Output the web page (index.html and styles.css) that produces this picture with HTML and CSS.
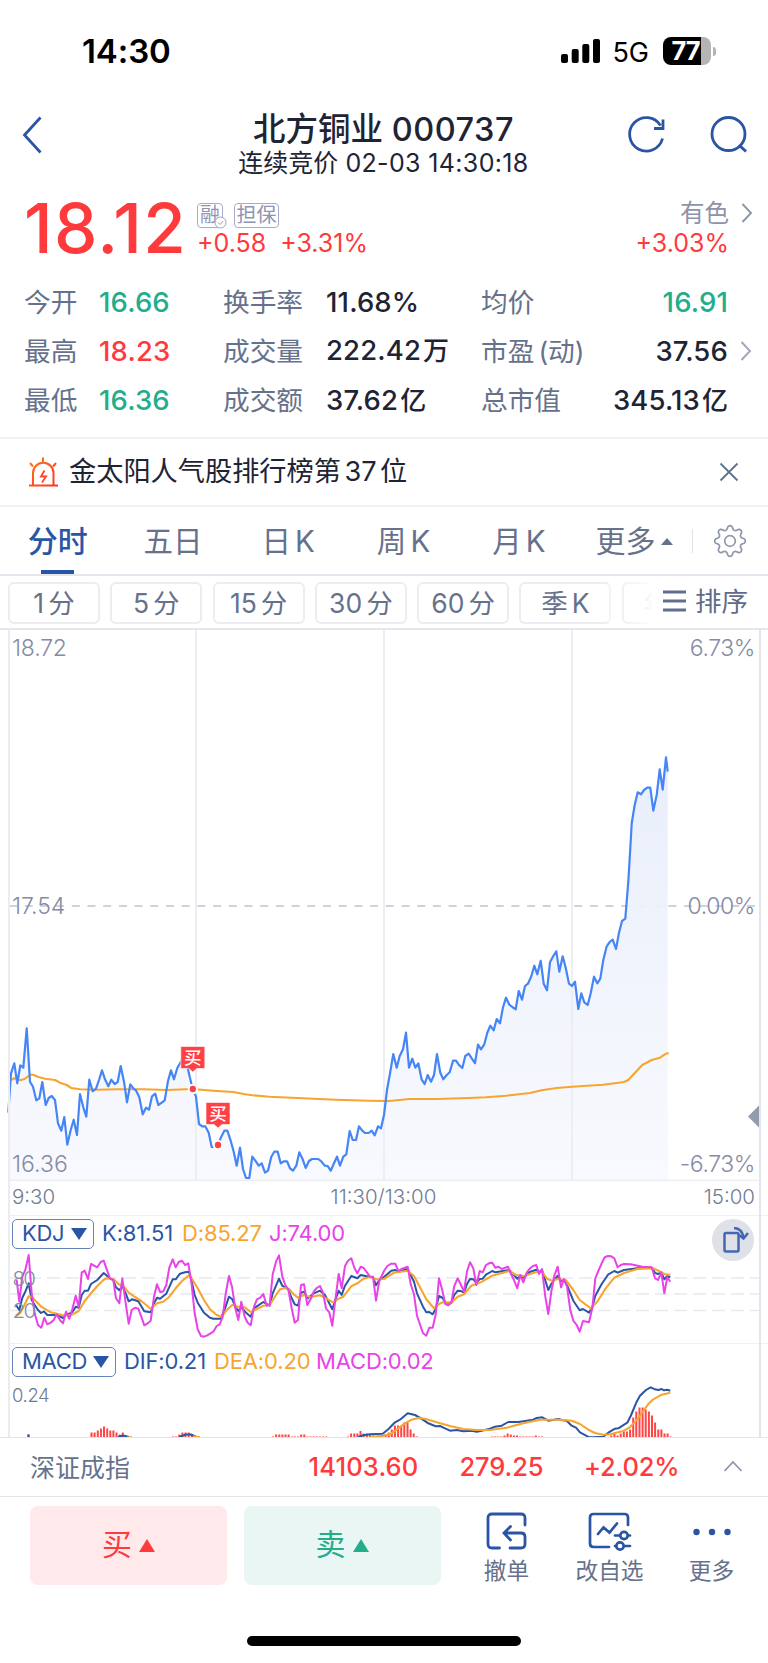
FILE: index.html
```html
<!DOCTYPE html>
<html lang="zh-CN">
<head>
<meta charset="utf-8">
<title>北方铜业 000737</title>
<link rel="stylesheet" href="styles.css">
</head>
<body>
<div class="app">
  <div class="status">
    <span class="clock">14:30</span>
    <svg class="signal" width="40" height="26" viewBox="0 0 40 26"><g fill="#000"><rect x="0" y="16" width="7" height="9" rx="2"/><rect x="10.7" y="11" width="7" height="14" rx="2"/><rect x="21.3" y="6" width="7" height="19" rx="2"/><rect x="32" y="1" width="7" height="24" rx="2"/></g></svg>
    <span class="net">5G</span>
    <div class="battery"><span>77</span></div><i class="batcap"></i>
  </div>

  <header class="header">
    <svg class="back" width="22" height="38" viewBox="0 0 22 38"><path d="M19.500 1.500 3.500 19 19.500 36.500" fill="none" stroke="#2a55a5" stroke-width="2.800"/></svg>
    <div class="titles"><h1>北方铜业 <b>000737</b></h1><p>连续竞价 <b>02-03 14:30:18</b></p></div>
    <svg class="refresh" width="40" height="40" viewBox="0 0 40 40"><path d="M35.500 23.500A16.700 16.700 0 1 1 33.500 10.500M36 4.500V13.500H27" fill="none" stroke="#2a55a5" stroke-width="2.800"/></svg>
    <svg class="search" width="40" height="40" viewBox="0 0 40 40"><circle cx="19.500" cy="19" r="16.500" fill="none" stroke="#2a55a5" stroke-width="2.800"/><path d="m30 30 7 6.500" stroke="#2a55a5" stroke-width="3"/></svg>
  </header>

  <section class="quote">
    <div class="price">18.12</div>
    <div class="change">
      <div class="badges"><span class="badge one">融<svg width="13" height="13" viewBox="0 0 13 13"><circle cx="6.500" cy="6.500" r="5.500" fill="#fff" stroke="#9c9fc0"/><path d="m4 6.500 2 2 3.200-3.600" fill="none" stroke="#9c9fc0"/></svg></span><span class="badge">担保</span></div>
      <div class="delta"><span>+0.58</span><span>+3.31%</span></div>
    </div>
    <div class="sector"><div class="sname">有色</div><div class="sdelta">+3.03%</div></div>
    <svg class="chev c1" width="12" height="20" viewBox="0 0 12 20"><path d="m1.500 1 8.500 9-8.500 9" fill="none" stroke="#8d95aa" stroke-width="1.900"/></svg>
  </section>

  <section class="stats">
    <span class="k">今开</span><span class="v g">16.66</span><span class="k">换手率</span><span class="v">11.68%</span><span class="k">均价</span><span class="v r g">16.91</span><i></i>
    <span class="k">最高</span><span class="v red">18.23</span><span class="k">成交量</span><span class="v">222.42<em>万</em></span><span class="k">市盈<em>(动)</em></span><span class="v r">37.56</span><svg class="chev" width="12" height="20" viewBox="0 0 12 20"><path d="m1.500 1 8.500 9-8.500 9" fill="none" stroke="#a0a6ba" stroke-width="1.900"/></svg>
    <span class="k">最低</span><span class="v g">16.36</span><span class="k">成交额</span><span class="v">37.62<em>亿</em></span><span class="k">总市值</span><span class="v r">345.13<em>亿</em></span><i></i>
  </section>

  <section class="notice">
    <svg width="32" height="32" viewBox="0 0 32 32" fill="none"><defs><linearGradient id="alarm" x1="0" y1="0" x2="1" y2="1"><stop offset="0" stop-color="#ff7a1a"/><stop offset="1" stop-color="#ff3321"/></linearGradient></defs><path d="M2 29.500h29M6 29.500V17a9 9 0 0 1 20.500 0v12.500M16 1.500V6M3 7l3 3.500M29 7l-3 3.500" stroke="url(#alarm)" stroke-width="2"/><path d="m17.500 14.500-3.500 6h5l-4 6" stroke="#ff4527" stroke-width="1.800"/></svg>
    <span class="ntext">金太阳人气股排行榜第<b>37</b>位</span>
    <svg class="close" width="20" height="20" viewBox="0 0 20 20"><path d="m1.500 1.500 17 17m0-17-17 17" stroke="#5f6f8f" stroke-width="1.800"/></svg>
  </section>

  <nav class="tabs">
    <span class="tab on">分时</span><span class="tab">五日</span><span class="tab">日<b>K</b></span><span class="tab">周<b>K</b></span><span class="tab">月<b>K</b></span><span class="tab more">更多<i class="up"></i></span>
    <i class="sep"></i>
    <svg class="gear" width="34" height="34" viewBox="0 0 34 34" fill="none" stroke="#8f97ad" stroke-width="1.700"><circle cx="17" cy="17" r="5.300"/><path id="gear"/></svg>
  </nav>

  <div class="periods">
    <span class="chip">1<em>分</em></span><span class="chip">5<em>分</em></span><span class="chip">15<em>分</em></span><span class="chip">30<em>分</em></span><span class="chip">60<em>分</em></span><span class="chip soft">季<em>K</em></span><span class="chip ghost">年<em>K</em></span>
    <div class="sort"><svg width="24" height="22" viewBox="0 0 24 22"><path d="M0 2h23M0 11h23M0 20h23" stroke="#5f6f8f" stroke-width="3"/></svg>排序</div>
  </div>

  <main class="charts">
    <section class="plot">
      <svg width="768" height="551" viewBox="0 630 768 551">
        <defs><linearGradient id="area" gradientUnits="userSpaceOnUse" x1="0" y1="755" x2="0" y2="1180"><stop offset="0" stop-color="#e6edfa"/><stop offset="1" stop-color="#f8f9fe"/></linearGradient></defs>
        <path class="zero" d="M9 906H760"/>
        <path id="fill" fill="url(#area)" fill-opacity=".92"/>
        <path class="grid" d="M196 630V1180M384 630V1180M572 630V1180M8 1180.500H760"/>
        <path id="avg" class="line avg"/><path id="px" class="line px"/>
        <g id="marks"></g>
        <path d="M760 1104.500v24l-12-12z" fill="#929bae"/>
      </svg>
      <span class="lab tl">18.72</span><span class="lab tr">6.73%</span>
      <span class="lab ml">17.54</span><span class="lab mr">0.00%</span>
      <span class="lab bl">16.36</span><span class="lab br">-6.73%</span>
    </section>
    <div class="axis"><span>9:30</span><span>11:30/13:00</span><span>15:00</span></div>
    <section class="kdj">
      <div class="legend"><span class="pick kp">KDJ<i></i></span><span class="blue w1">K:81.51</span><span class="org w2">D:85.27</span><span class="pur w3">J:74.00</span></div>
      <svg width="768" height="128" viewBox="0 1215 768 128">
        <path class="dash" d="M9 1278H760M9 1294H760M9 1310.500H760"/>
        <path id="k" class="line k"/><path id="d" class="line avg"/><path id="j" class="line j"/>
        <g class="lvl"><text x="12.500" y="1286">80</text><text x="12.500" y="1318">20</text></g>
      </svg>
      <div class="rotate"><svg width="42" height="42" viewBox="0 0 42 42" fill="none" stroke="#4168b1" stroke-width="2.500"><rect x="12.500" y="14" width="14" height="18.500" rx="1.500"/><path d="M22 9q8 .5 9.500 9.500M27 16l4.500 3.500 4.500-5.500"/></svg></div>
    </section>
    <section class="macd">
      <div class="legend"><span class="pick mp">MACD<i></i></span><span class="blue w4">DIF:0.21</span><span class="org w5">DEA:0.20</span><span class="pur w6">MACD:0.02</span></div>
      <span class="scale">0.24</span>
      <svg width="768" height="94" viewBox="0 1343 768 94"><path id="bars" stroke="#ff4545" stroke-width="2"/><path id="dif" class="line k"/><path id="dea" class="line avg"/></svg>
    </section>
  </main>

  <section class="index"><span class="iname">深证成指</span><span class="i1">14103.60</span><span class="i2">279.25</span><span class="i3">+2.02%</span><svg width="20" height="12" viewBox="0 0 20 12"><path d="m1.500 11 8.500-9 8.500 9" fill="none" stroke="#8d95aa" stroke-width="1.700"/></svg></section>

  <footer class="actions">
    <div class="btn buy">买<i></i></div><div class="btn sell">卖<i></i></div>
    <div class="act a1"><svg width="44" height="40" viewBox="0 0 44 40" fill="none" stroke="#2a55a5" stroke-width="2.800" stroke-linecap="round"><path d="M40 13V6q0-4-4-4H7Q3 2 3 6v26q0 4 4 4h7.500M25 36h11q4 0 4-4v-7q0-4-4-4H19.500M25.500 14.500 19 21l6.500 7"/></svg><span>撤单</span></div>
    <div class="act a2"><svg width="44" height="40" viewBox="0 0 44 40" fill="none" stroke="#2a55a5" stroke-width="2.700" stroke-linecap="round"><path d="M40 13V5.500Q40 2 36.500 2H5.500Q2 2 2 5.500v26q0 3.500 3.500 3.500H21M10 22l5.500-6.500 6 5L29 11.500M27 23.500H31m10 0h1M27 34h1m9 0H42"/><circle cx="36" cy="23.500" r="3.700"/><circle cx="32" cy="34" r="3.700"/></svg><span>改自选</span></div>
    <div class="act a3"><svg width="44" height="40" viewBox="0 0 44 40" fill="#2a55a5"><circle cx="6.500" cy="20" r="3.200"/><circle cx="22" cy="20" r="3.200"/><circle cx="37.500" cy="20" r="3.200"/></svg><span>更多</span></div>
  </footer>
  <div class="home"></div>
</div>
<script src="chart.js"></script>
</body>
</html>
```

FILE: styles.css
```css
* { box-sizing: border-box; }
body { margin: 0; background: #fff; font-family: Inter, "Noto Sans CJK SC", sans-serif; color: #1e2433; }
i, em { font-style: normal; }
b { font-weight: inherit; }
.app { width: 768px; height: 1663px; overflow: hidden; display: flex; flex-direction: column; }
.app > * { flex-shrink: 0; }
svg { display: block; flex-shrink: 0; }
span { white-space: nowrap; }

.status { height: 102px; display: flex; align-items: center; padding-left: 82px; color: #000; }
.clock { width: 479px; font-size: 33px; font-weight: 600; letter-spacing: -.1px; }
.net { width: 50px; margin: 2px 0 0 11.500px; font-size: 27px; letter-spacing: -.2px; }
.battery { width: 48px; height: 28px; border-radius: 8px; background: linear-gradient(90deg, #000 38px, #b4b4b4 38px); color: #fff; font-size: 25.500px; font-weight: 700; line-height: 28px; padding-left: 9px; letter-spacing: -1px; }
.batcap { width: 3px; height: 9px; margin-left: 2px; border-radius: 0 4px 4px 0; background: #b4b4b4; }

.header { height: 88px; display: flex; position: relative; padding: 13px 19px 0 21px; }
.back { margin-top: 1px; }
.titles { width: 300px; margin: -4px 0 0 191px; text-align: center; }
.titles h1 { margin: 0; font-size: 32.500px; line-height: 38px; font-weight: 500; white-space: nowrap; }
.titles h1 b { letter-spacing: .5px; }
.titles p { margin: -1px 0 0; font-size: 25px; line-height: 30px; white-space: nowrap; }
.titles p b { letter-spacing: .35px; }
.refresh { margin-left: 94px; }
.search { margin-left: 42px; }

.quote { height: 86px; display: flex; position: relative; }
.price { width: 173px; margin-left: 24px; font-size: 69px; font-weight: 500; line-height: 76px; color: #ff3a3d; letter-spacing: 1.300px; }
.badges { display: flex; gap: 11px; margin-top: 12.500px; height: 26px; }
.badge { position: relative; width: 45px; height: 25px; border: 1.500px solid #a9abc8; border-radius: 4px; font-size: 20px; line-height: 22px; text-align: center; color: #8f93b4; }
.badge.one { width: 26px; }
.badge svg { position: absolute; right: -5px; bottom: -2px; }
.delta { display: flex; gap: 14px; font-size: 25px; line-height: 30px; margin-top: -1px; color: #ff3a3d; }
.sector { margin-left: auto; margin-right: 39px; text-align: right; }
.sname { margin-top: 8px; font-size: 24.500px; line-height: 30px; color: #8e93aa; }
.sdelta { font-size: 25px; line-height: 30px; margin-top: -.5px; color: #ff3a3d; }
.c1 { position: absolute; left: 741px; top: 13px; }

.stats { height: 161px; padding: 1px 0 0 24px; display: grid; grid-template-columns: 75px 124px 103px 155px 120px 127px 40px; grid-auto-rows: 49.300px; align-items: center; line-height: 40px; }
.k { font-size: 26.700px; color: #66718c; }
.k em { margin-left: 4px; }
.v { font-size: 27.500px; font-weight: 500; letter-spacing: .15px; }
.v em { margin-left: 2px; font-size: 26px; letter-spacing: 0; }
.r { text-align: right; }
.g { color: #23ad8b; }
.red { color: #ff3a3d; }
.chev { margin-left: 12px; }
.quote .chev { margin: 0; }

.notice { height: 70px; border-top: 2px solid #f0f1f4; border-bottom: 2px solid #f0f1f4; display: flex; align-items: center; padding: 0 29px 0 27px; }
.ntext { margin-left: 10px; font-size: 27.200px; line-height: 40px; }
.ntext b { margin: 0 3.500px; }
.close { margin-left: auto; }

.tabs { height: 69px; border-bottom: 2px solid #e6e7ee; display: flex; align-items: center; position: relative; font-size: 29.500px; color: #66718c; }
.tab { width: 115.300px; text-align: center; line-height: 40px; padding-top: 1px; }
.tab b { margin-left: 4px; }
.tab.on { position: relative; color: #2a55a5; font-weight: 500; font-size: 30px; }
.tab.on::after { content: ""; position: absolute; left: 41px; top: 50px; width: 33px; height: 3.500px; background: #2a55a5; }
.tab.more { display: flex; align-items: center; justify-content: center; width: 116px; gap: 6px; font-size: 30px; }
.up { border: 6.500px solid transparent; border-bottom: 7px solid #66718c; border-top: 0; }
.sep { width: 1px; height: 24px; background: #e0e2ea; }
.gear { margin-left: 20px; }

.periods { position: relative; height: 54px; padding: 6px 0 0 8px; display: flex; gap: 10.300px; border-bottom: 2px solid #e6e7ee; overflow: hidden; }
.chip { flex: none; width: 92px; height: 42px; border: 2px solid #ececf1; border-radius: 6px; text-align: center; line-height: 38px; font-size: 26.500px; color: #66718c; }
.chip em { margin-left: 4px; }
.ghost { color: #a9afbf; }
.sort { position: absolute; right: 0; top: 2px; width: 148px; height: 48px; padding-left: 43px; display: flex; align-items: center; gap: 8px; font-size: 26.500px; line-height: 46px; padding-bottom: 2px; color: #5f6b88; background: linear-gradient(90deg, rgba(255,255,255,.2), #fff 33px); }
.soft { border-right-color: #f4f4f7; }

.charts { position: relative; height: 807px; overflow: hidden; }
.charts::before, .charts::after { content: ""; position: absolute; top: 0; bottom: 0; left: 8px; width: 1.500px; background: #ececf0; z-index: 1; }
.charts::after { left: 759px; width: 2px; background: #e4e4ed; }
.plot { position: relative; height: 551px; }
.line { fill: none; stroke-width: 2; stroke-linejoin: round; }
.px { stroke: #4585f6; stroke-width: 2.200; }
.avg { stroke: #f7a52e; stroke-width: 2.100; }
.k.line { stroke: #2a55a5; }
.j { stroke: #e843e8; }
.grid { fill: none; stroke: #ebecf0; stroke-width: 1.700; }
.zero { stroke: #bfc3d3; stroke-width: 1.700; stroke-dasharray: 8 7.700; }
.dash { stroke: #e8e9f1; stroke-width: 1.300; stroke-dasharray: 13 6; }
.lvl text { font-size: 20.500px; font-weight: 300; fill: #858da3; letter-spacing: -1.700px; }
.lab { position: absolute; font-size: 23px; font-weight: 300; line-height: 26px; color: #858ba5; }
.tr, .mr, .br { letter-spacing: -.4px; }
.tl { left: 12px; top: 5px; letter-spacing: -.2px; } .tr { right: 13px; top: 5px; }
.ml { left: 12px; top: 263px; } .mr { right: 13px; top: 263px; }
.bl { left: 12px; top: 521px; } .br { right: 13px; top: 521px; }
.axis { height: 34px; display: grid; grid-template-columns: 1fr 1fr 1fr; padding: 0 13px 0 12px; line-height: 31.500px; font-size: 20.500px; color: #717b94; font-weight: 300; }
.axis span:nth-child(2) { text-align: center; }
.axis span:nth-child(3) { text-align: right; }
.kdj { position: relative; height: 128px; border-top: 1.500px solid #f0f0f4; margin-left: 8px; }
.kdj > svg, .macd > svg { position: absolute; left: -8px; top: -1px; }
.macd { position: relative; height: 94px; border-top: 1.500px solid #f0f0f4; margin-left: 8px; }
.legend { display: flex; padding: 2.500px 0 0 4px; line-height: 29px; font-size: 22px; letter-spacing: -.15px; }
.pick { height: 30px; line-height: 27px; border: 1.500px solid #6583bd; border-radius: 5px; color: #2a55a5; display: flex; align-items: center; justify-content: space-between; padding: 0 6.500px 0 9px; letter-spacing: -.3px; }
.pick i { border: 8px solid transparent; border-top: 12px solid #2a55a5; border-bottom: 0; }
.kp { width: 82px; margin-right: 8px; } .mp { width: 104px; margin-right: 8px; }
.w1 { width: 80px; } .w2 { width: 87px; } .w4 { width: 90px; } .w5 { width: 102px; }
.blue { color: #2a55a5; } .org { color: #f7a52e; } .pur { color: #e843e8; }
.scale { position: absolute; left: 4px; top: 38px; font-size: 18.500px; line-height: 26px; color: #717b94; font-weight: 300; letter-spacing: -.4px; }
.rotate { position: absolute; right: 14px; top: 3px; width: 42px; height: 42px; border-radius: 50%; background: #dfe0e8; z-index: 2; }

.index { height: 60px; border-top: 1.500px solid #e2e4ea; border-bottom: 1.500px solid #e2e4ea; display: flex; align-items: center; padding: 0 0 2px 30px; color: #ff3a3d; font-size: 25.500px; font-weight: 500; }
.iname { width: 278.500px; font-size: 25px; font-weight: 400; color: #66718c; }
.i1 { width: 151px; letter-spacing: .15px; } .i2 { width: 124.500px; letter-spacing: -.1px; } .i3 { width: 139px; letter-spacing: -.2px; }

.actions { height: 139px; display: flex; padding: 9px 0 0 30px; }
.btn { width: 197px; height: 79px; border-radius: 8px; display: flex; align-items: center; justify-content: center; gap: 7px; font-size: 30px; line-height: 40px; padding-bottom: 3px; }
.btn i { border: 8.500px solid transparent; border-bottom: 13px solid currentColor; border-top: 0; margin-top: 2px; }
.buy { background: #ffe9ea; color: #ff3a3d; }
.sell { background: #e9f6f4; color: #23ad8b; margin-left: 16.500px; }
.act { width: 100px; display: flex; flex-direction: column; align-items: center; padding-top: 6px; font-size: 22.700px; line-height: 34px; color: #66718c; }
.act span { margin-top: 2px; }
.a1 { margin-left: 16px; }
.a2 { margin-left: 3px; }
.a3 { margin-left: 2px; }
.home { width: 274px; height: 10px; border-radius: 5px; background: #000; margin-left: 247px; }
```

FILE: chart.js
```js
// Samples are stored in thirds of a pixel, each block with its own origin.
const block = (ox, oy, s) => s.trim().split(/\s+/).map(p => {
  const [x, y] = p.split(',').map(Number);
  return [ox + x / 3, oy + y / 3];
});
const toPath = pts => 'M' + pts.map(p => p[0].toFixed(1) + ' ' + p[1].toFixed(1)).join('L');
const set = (id, d) => document.getElementById(id).setAttribute('d', d);

const price = [
  ...block(0, 1000, `25,338 33,220 43,190 52,250 61,196 70,203 80,85 90,245 99,260 109,301 118,295 127,246 137,315 146,294 155,288 165,300 174,370 184,392 193,351 202,434 212,390 221,359 231,405 240,282 250,322 259,350 268,239 278,274 288,266 297,240 306,211 315,238 325,259 334,239 344,252 353,246 362,198 372,245 381,307 391,253 400,265 409,273 418,292 428,343 438,323 447,329 456,289 466,281 475,315 485,308 494,301 504,243 513,211 522,238 532,204 541,188 550,178 560,190 569,230 578,266 588,290 597,372 607,379 616,379 626,398 635,441 645,441 654,434 664,410 673,392 682,392 692,422 701,455 710,497 720,443 729,507 738,534 748,534`),
  ...block(236, 1000, `49,470 58,482 68,497 77,490 87,518 96,512 106,470 115,455 125,455 134,490 144,484 153,484 162,505 171,512 181,497 190,457 200,478 209,504 219,483 228,477 247,477 256,484 266,497 275,498 284,512 294,490 303,470 312,497 322,470 331,463 341,393 350,420 360,420 369,379 379,392 387,399 398,399 407,392 416,406 426,379 435,385 444,345 453,270 463,215 472,162 482,203 491,168 501,148 510,98 519,203 529,176 538,203 547,190 557,239 566,252 575,225 585,245 594,225 603,162 613,218 622,238 632,225 641,217 651,182 660,182 670,196 679,204 688,168 698,161 707,175 717,189 726,134 735,148 745,133 754,98 763,77 773,91 782,57 792,70 801,22`),
  ...block(480, 740, `78,773 88,794 97,801 107,808 116,753 126,779 135,738 144,731 154,709 163,677 172,703 182,662 191,731 201,751 210,667 220,648 229,634 238,695 248,649 257,683 267,731 276,738 285,725 295,807 304,760 313,787 323,795 332,760 342,710 352,730 361,716 370,660 380,619 389,606 398,599 408,627 417,578 426,543 436,536 445,425 450,340 455,250 464,195 473,157 483,163 492,150 502,143 511,143 520,212 530,165 539,88 548,149 558,52 563,95`)
];
// The chart block joins at x≈506: drop samples that overlap the next block.
const joined = price.filter((p, i) => !i || p[0] > price[i - 1][0]);
set('px', toPath(joined));
set('fill', toPath(joined) + 'V1180H8Z');

set('avg', toPath([
  ...block(0, 1000, `33,240 43,235 61,241 75,236 90,224 100,224 115,231 135,236 165,240 180,248 200,255 214,264 240,268 290,269 350,268 430,268 500,270 578,267 640,272 700,276 735,283`),
  ...block(236, 1000, `50,286 100,290 200,295 300,299 400,302 460,303 490,300 520,297 600,297 700,294 750,292`),
  ...block(480, 1030, `78,197 150,189 185,181 230,174 276,170 370,164 432,156 445,150 465,128 487,105 515,90 540,83 558,71 566,69`)
]));

document.getElementById('marks').innerHTML = [[192.800, 1089, 1046.500], [218, 1145, 1102.500]].map(([x, y, t]) =>
  `<circle cx="${x}" cy="${y}" r="5.200" fill="#fff"/><circle cx="${x}" cy="${y}" r="3.200" fill="#ff4146"/>` +
  `<path d="M${x - 12} ${t}h24v22h-8l-4 3.500-4-3.500h-8z" fill="#ff4146" stroke="#fff" stroke-width=".6"/>` +
  `<text x="${x}" y="${t + 17.500}" text-anchor="middle" font-size="17.500" font-weight="500" fill="#fff">买</text>`).join('');

set('j', toPath([
  ...block(0, 1200, `50,240 58,305 67,230 76,210 86,165 95,280 104,340 114,375 124,383 133,353 142,373 152,368 161,360 170,343 180,361 189,370 198,335 208,356 217,328 227,287 236,322 245,218 254,212 264,237 273,192 292,202 302,186 311,182 320,208 330,235 340,240 348,295 358,310 367,235 377,310 386,371 395,330 405,323 415,326 424,350 433,376 443,370 452,362 462,290 471,253 481,277 490,274 499,255 508,203 518,178 527,202 536,186 546,182 555,195 565,190 574,245 584,340 593,388 603,408 612,410 622,406 640,395 650,378 659,373 668,350 678,275 687,228 696,260 706,325 715,360 724,305 734,350 743,368 752,376 762,320 771,298 781,293 790,282 800,317 809,313 818,223 828,185 837,166 847,230 856,255 865,268 875,325 884,368 894,360 903,255 912,253 922,315 932,297 941,275 950,264 960,258 969,278 978,325 988,337 997,377 1006,300 1016,222 1025,265 1035,198 1044,182 1054,175 1063,203 1072,220 1082,200 1091,204 1110,230 1119,230 1128,302 1138,243`),
  ...block(384, 1200, `0,213 10,198 22,191 34,191 43,213 55,206 71,200 80,253 90,283 99,347 117,400 127,407 136,383 146,383 155,343 165,235 174,267 184,312 193,316 202,308 211,258 221,235 231,255 240,275 249,214 258,187 268,205 277,255 287,213 296,217 306,195 315,190 325,188 334,203 343,200 353,207 372,200 381,222 390,240 400,265 409,225 418,247 428,218 437,206 447,198 457,195 465,222 474,207 484,290 493,342 502,275 511,227 521,200 531,262 540,237 549,260 559,330 568,362 578,375 587,395 597,363 615,367 625,325 634,235 643,213 653,190 662,172 672,168 682,169 691,175 701,202 710,195 720,192 740,193 775,200 803,202 813,235 822,240 832,217 841,280 850,232 859,245`)
]));
set('k', toPath([
  ...block(0, 1200, `48,315 58,330 67,293 76,275 86,250 95,300 104,315 114,330 123,339 132,334 142,345 170,345 189,354 198,345 217,337 227,320 236,323 245,285 254,272 264,272 273,252 292,240 311,219 330,235 340,240 348,262 358,271 367,258 377,280 386,304 396,298 415,304 433,334 452,337 462,310 471,293 480,296 499,281 518,238 527,238 540,221 555,217 567,215 574,240 584,285 593,308 612,338 630,353 640,356 662,356 675,325 687,290 697,298 706,320 715,333 724,322 740,340 752,350 762,325 790,306 809,317 818,280 837,236 847,257 865,268 875,295 884,313 894,317 903,278 912,275 924,295 941,280 960,272 975,285 997,328 1006,300 1016,272 1025,285 1035,257 1054,228 1072,235 1082,225 1110,231 1119,231 1128,256 1138,240`),
  ...block(384, 1200, `0,231 22,212 34,210 43,215 71,207 90,245 99,280 117,320 127,337 136,336 146,343 155,327 165,288 176,294 184,308 202,308 211,285 221,272 231,273 240,278 249,252 258,237 268,238 277,248 287,237 296,236 306,224 325,213 334,217 376,210 400,236 409,227 418,233 437,216 457,209 465,216 474,210 493,270 502,252 521,227 531,243 540,240 550,258 568,302 587,331 597,327 615,338 625,322 634,287 653,252 672,224 691,213 701,218 720,210 760,205 805,204 813,219 822,222 832,217 841,238 850,228 859,232`)
]));
set('d', toPath([
  ...block(0, 1200, `48,347 60,340 70,322 86,289 95,290 104,300 124,320 152,337 189,346 217,344 236,333 254,303 273,280 292,258 311,239 320,235 340,237 358,254 367,254 386,278 405,291 424,303 452,326 471,310 490,305 508,290 527,265 546,243 567,226 574,233 593,265 612,300 630,328 650,345 665,350 680,330 697,315 715,320 734,322 752,336 771,327 790,317 809,315 828,285 840,268 856,264 868,268 880,282 894,293 912,285 930,291 960,286 978,295 1000,307 1016,296 1030,290 1054,259 1072,250 1091,236 1110,231 1128,238`),
  ...block(384, 1200, `0,237 30,218 71,212 90,228 108,262 127,298 150,325 165,312 176,307 202,308 221,290 240,283 262,257 290,247 325,227 376,213 395,225 420,228 457,216 474,215 490,237 505,242 521,237 545,240 568,270 587,300 620,325 640,305 665,265 691,233 720,219 760,207 803,203 825,213 841,222 859,225`)
]));

set('dif', 'M28.500 1434.500V1437M118 1437L123 1435.500L129 1437M179 1437L186 1434.500L191 1434.500L196 1437' + toPath(block(340, 1380, `55,171 70,166 90,163 128,161 145,148 165,127 180,119 203,100 225,105 243,115 265,130 287,139 300,138 315,145 330,152 350,150 370,154 395,152 410,155 425,152 450,146 465,140 485,137 505,126 535,126 560,122 580,119 590,114 607,112 625,122 655,117 668,121 680,122 695,137 708,143 720,157 748,172 760,172 790,170 805,158 825,146 835,145 862,128 872,108 890,65 900,47 918,30 932,22 945,28 955,30 965,27 972,31 982,29 991,32`)));
set('dea', 'M127 1437.500L132 1437M193 1436.500L200 1437' + toPath(block(340, 1380, `90,171 128,167 150,163 175,145 195,130 215,119 235,114 255,116 290,127 330,138 370,147 410,150 450,150 500,143 550,130 600,119 660,119 695,122 720,132 745,149 765,159 790,164 810,163 850,153 868,143 890,120 905,100 925,72 940,58 965,44 991,38`)));

const runs = [
  [28.500, [3]],
  [91.500, [5, 5, 7, 9, 11, 9, 7, 7, 5, 3, 5, 2]],
  [173, [1, 1, 3, 5, 5, 5, 3, 1]],
  [273, [1, 3, 3, 3, 3, 3, 1, 1, 1, 3, 3, 1, 1, 1, 1, 1, 1, 1]],
  [348, [1, 4, 4, 4, 6.500, 4, 4, 3, 2, 1, 2, 2, 3, 5, 8, 12, 12, 12, 15, 15, 8, 4, 1]],
  [492, [1, 1, 1, 1, 2, 4, 3, 2, 2, 1, 1, 1, 1, 1, 2, 1, 1]],
  [611.300, [2, 4, 2, 4, 6, 6, 8, 20, 26, 30, 30, 28, 26, 22, 15, 8, 8, 4, 4, 1]]
];
set('bars', runs.map(([x, hs]) => hs.map((h, i) => `M${(x + i * 3.130).toFixed(1)} 1437.500v${-h}`).join('')).join(''));

// Scalloped gear outline: eight rounded teeth.
let g = '';
for (let a = 0; a <= 360; a += 3) {
  const t = a * Math.PI / 180, w = Math.cos(8 * t);
  const r = 13.400 + 1.900 * Math.sign(w) * Math.pow(Math.abs(w), .6);
  g += (a ? 'L' : 'M') + (17 + r * Math.sin(t)).toFixed(2) + ' ' + (17 - r * Math.cos(t)).toFixed(2);
}
set('gear', g + 'Z');
```
